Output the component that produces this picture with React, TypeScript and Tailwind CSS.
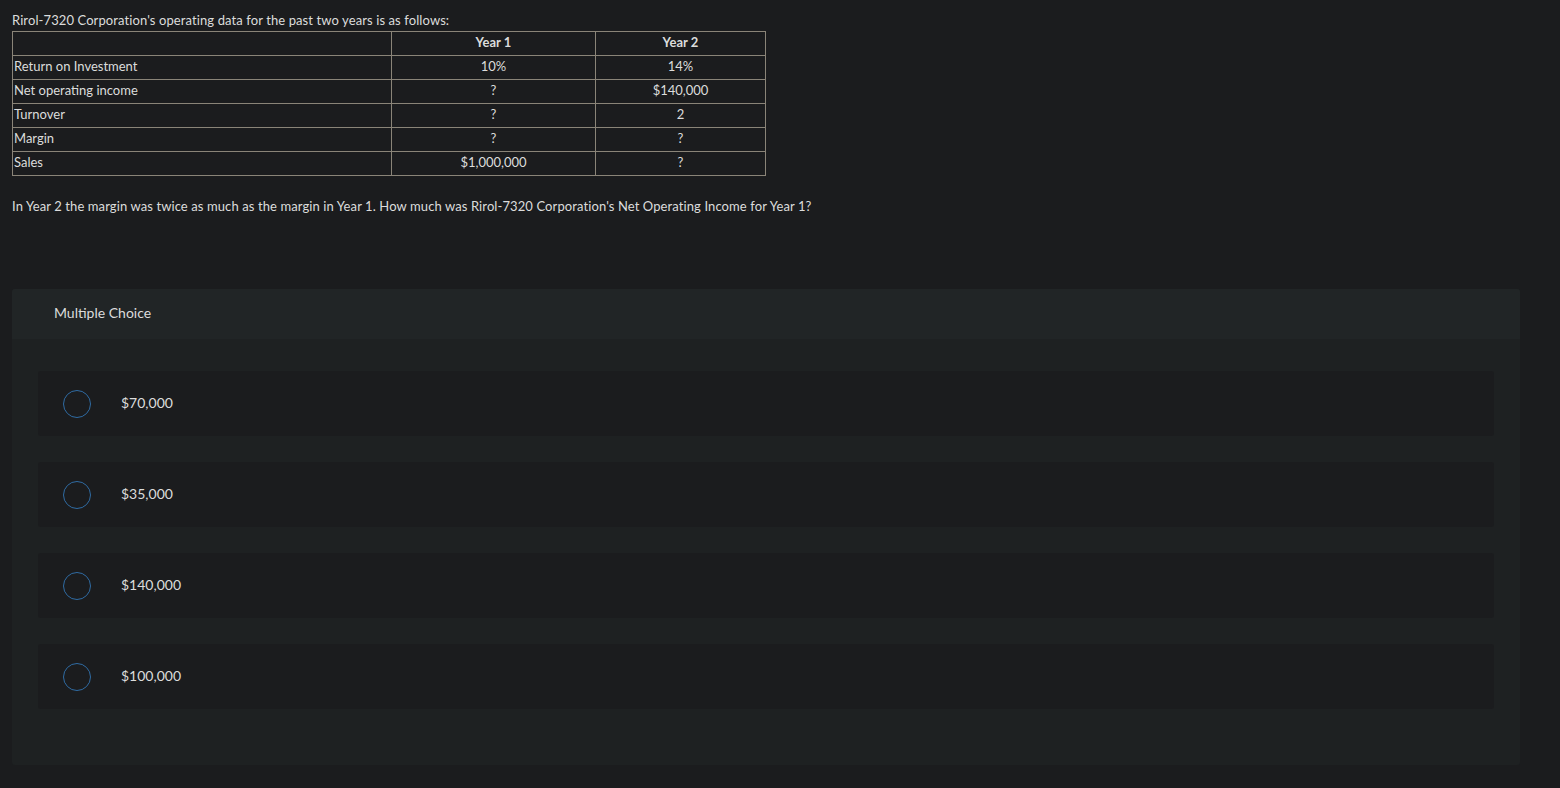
const ROWS = [
  { label: "Return on Investment", y1: "10%", y2: "14%" },
  { label: "Net operating income", y1: "?", y2: "$140,000" },
  { label: "Turnover", y1: "?", y2: "2" },
  { label: "Margin", y1: "?", y2: "?" },
  { label: "Sales", y1: "$1,000,000", y2: "?" },
];

const CHOICES = ["$70,000", "$35,000", "$140,000", "$100,000"];

export default function App() {
  return (
    <div
      className="min-h-[788px] bg-[#1b1c1e] text-[#dcdcdc] px-3 pt-[12px]"
      style={{ fontFamily: "Lato, 'Open Sans', Arial, sans-serif" }}
    >
      <p className="text-[13px] leading-[16px] tracking-[0.1px]">
        Rirol-7320 Corporation's operating data for the past two years is as follows:
      </p>

      <table className="mt-[3px] border-collapse text-[13px] leading-[16px]">
        <thead>
          <tr className="h-[24px]">
            <th className="w-[379px] border border-[#8a8478]"></th>
            <th className="w-[204px] border border-[#8a8478] font-bold text-center pb-[3px]">Year 1</th>
            <th className="w-[170px] border border-[#8a8478] font-bold text-center pb-[3px]">Year 2</th>
          </tr>
        </thead>
        <tbody>
          {ROWS.map((r) => (
            <tr key={r.label} className="h-[24px]">
              <td className="border border-[#8a8478] px-[1px] pb-[3px]">{r.label}</td>
              <td className="border border-[#8a8478] text-center pb-[3px]">{r.y1}</td>
              <td className="border border-[#8a8478] text-center pb-[3px]">{r.y2}</td>
            </tr>
          ))}
        </tbody>
      </table>

      <p className="mt-[22px] text-[13px] leading-[16px] tracking-[0.1px]">
        In Year 2 the margin was twice as much as the margin in Year 1. How much was Rirol-7320 Corporation's Net Operating Income for Year 1?
      </p>

      <div className="mt-[75px] w-[1508px] rounded-[3px] bg-[#1e2122] pb-[56px]">
        <div className="h-[50px] flex items-center px-[42px] pb-[3px] bg-[#212526] rounded-t-[3px] text-[14px]">
          Multiple Choice
        </div>
        <div className="flex flex-col gap-[26px] px-[26px] pt-[32px]">
          {CHOICES.map((c) => (
            <div key={c} className="h-[65px] flex items-center rounded-[3px] bg-[#1b1c1e]">
              <span className="ml-[25px] w-[28px] h-[28px] rounded-full border-[1.5px] border-[#2f6ba3]" />
              <span className="ml-[30px] pb-[2px] text-[14px]">{c}</span>
            </div>
          ))}
        </div>
      </div>
    </div>
  );
}
